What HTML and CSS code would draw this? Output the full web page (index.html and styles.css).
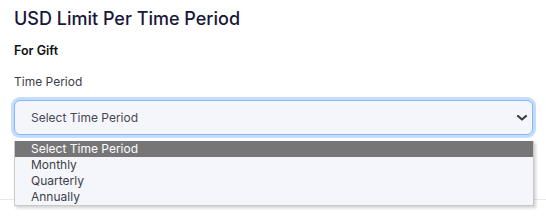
FILE: index.html
```html
<html>
    <head>
        <title>USD Limit Per Time Period</title>
        <link rel="stylesheet" href="styles.css">
    </head>
    <body>
        <div class="panel">
            <h2>USD Limit Per Time Period</h2>
            <p class="sub">For Gift</p>
            <label class="label">Time Period</label>

            <div class="select-wrap">
                <div class="select">
                    <span>Select Time Period</span>
                    <svg class="chevron" width="10" height="6" viewBox="0 0 10 6">
                        <path d="M1 1 L5 4.5 L9 1" fill="none" stroke="#3d3d3d" stroke-width="2.2" stroke-linecap="round" stroke-linejoin="round"/>
                    </svg>
                </div>
                <ul class="options">
                    <li class="active">Select Time Period</li>
                    <li>Monthly</li>
                    <li>Quarterly</li>
                    <li>Annually</li>
                </ul>
            </div>
        </div>
    </body>
</html>
```

FILE: styles.css
```css
body {
    margin: 0;
    font-family: Inter, "Noto Sans", sans-serif;
    background: #fff;
}
.panel {
    box-sizing: border-box;
    padding: 6px 13px 0 14px;
    height: 200px;
    border-bottom: 1px solid #e6e8ee;
}
h2 {
    margin: 0;
    font-size: 18px;
    font-weight: 500;
    color: #17173a;
    line-height: 26px;
}
.sub {
    margin: 11px 0 0;
    font-size: 12.5px;
    font-weight: 600;
    color: #111;
    line-height: 16px;
}
.label {
    display: block;
    margin-top: 15px;
    font-size: 12px;
    color: #3c3c48;
    line-height: 16px;
}
.select-wrap {
    position: relative;
    margin-top: 10px;
    width: 519px;
}
.select {
    display: flex;
    align-items: center;
    justify-content: space-between;
    height: 33px;
    padding: 0 5px 0 16px;
    border: 1px solid #86b7fe;
    border-radius: 6px;
    background: #f5f6fb;
    box-shadow: 0 0 0 3px #c4dcfd;
    font-size: 12px;
    color: #474752;
}
.chevron {
    margin-top: 1px;
}
.options {
    position: absolute;
    top: 41px;
    left: 0;
    width: 518px;
    margin: 0;
    padding: 0;
    list-style: none;
    background: #f5f6fb;
    border: 1px solid #c8c8c8;
    border-top: 0;
    box-shadow: 2px 2px 3px rgba(0,0,0,0.18);
    font-size: 12px;
    color: #3e3e48;
}
.options li {
    height: 16px;
    line-height: 16px;
    padding-left: 16px;
}
.options li.active {
    background: #767676;
    color: #fff;
}
```
